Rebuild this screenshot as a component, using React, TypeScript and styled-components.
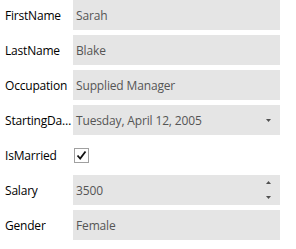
import React from 'react';
import styled, { createGlobalStyle } from 'styled-components';

const GlobalStyle = createGlobalStyle`
  html, body {
    margin: 0;
    padding: 0;
    background: #ffffff;
  }
  body {
    font-family: 'Open Sans', 'Noto Sans', sans-serif;
  }
`;

const Form = styled.div`
  display: grid;
  grid-template-columns: 73px 207px;
  grid-auto-rows: 30px;
  row-gap: 5px;
  width: 296px;
`;

const Label = styled.div`
  display: flex;
  align-items: center;
  padding-left: 5px;
  padding-right: 1px;
  font-size: 12px;
  letter-spacing: -0.2px;
  color: #000000;
  overflow: hidden;

  span {
    white-space: nowrap;
    overflow: hidden;
    text-overflow: ellipsis;
  }
`;

const Field = styled.div`
  display: flex;
  align-items: center;
  justify-content: space-between;
  background: #e5e5e5;
  padding: 0 9px 0 3px;
  font-size: 12px;
  letter-spacing: -0.15px;
  color: #555555;
`;

const Plain = styled.div`
  display: flex;
  align-items: center;
`;

const Check = styled.div`
  width: 13px;
  height: 13px;
  margin-left: 1px;
  border: 1px solid #a0a0a0;
  display: flex;
  align-items: center;
  justify-content: center;
  background: #fff;
`;

const Spin = styled.div`
  display: flex;
  flex-direction: column;
  justify-content: space-between;
  height: 18px;
`;

const Tri = ({ up }: { up?: boolean }) => (
  <svg width="5" height="3" viewBox="0 0 5 3">
    <path d={up ? 'M2.5 0 L5 3 L0 3 Z' : 'M0 0 L5 0 L2.5 3 Z'} fill="#505050" />
  </svg>
);

export default function App() {
  return (
    <>
      <GlobalStyle />
      <Form>
        <Label><span>FirstName</span></Label>
        <Field>Sarah</Field>
        <Label><span>LastName</span></Label>
        <Field>Blake</Field>
        <Label><span>Occupation</span></Label>
        <Field>Supplied Manager</Field>
        <Label><span>StartingDate</span></Label>
        <Field>
          <span>Tuesday, April 12, 2005</span>
          <Tri />
        </Field>
        <Label><span>IsMarried</span></Label>
        <Plain>
          <Check>
            <svg width="11" height="11" viewBox="0 0 11 11">
              <path d="M1.5 5.5 L4.2 8.5 L9.5 1.5" stroke="#111" strokeWidth="1.8" fill="none" />
            </svg>
          </Check>
        </Plain>
        <Label><span>Salary</span></Label>
        <Field>
          <span>3500</span>
          <Spin>
            <Tri up />
            <Tri />
          </Spin>
        </Field>
        <Label><span>Gender</span></Label>
        <Field>Female</Field>
      </Form>
    </>
  );
}
